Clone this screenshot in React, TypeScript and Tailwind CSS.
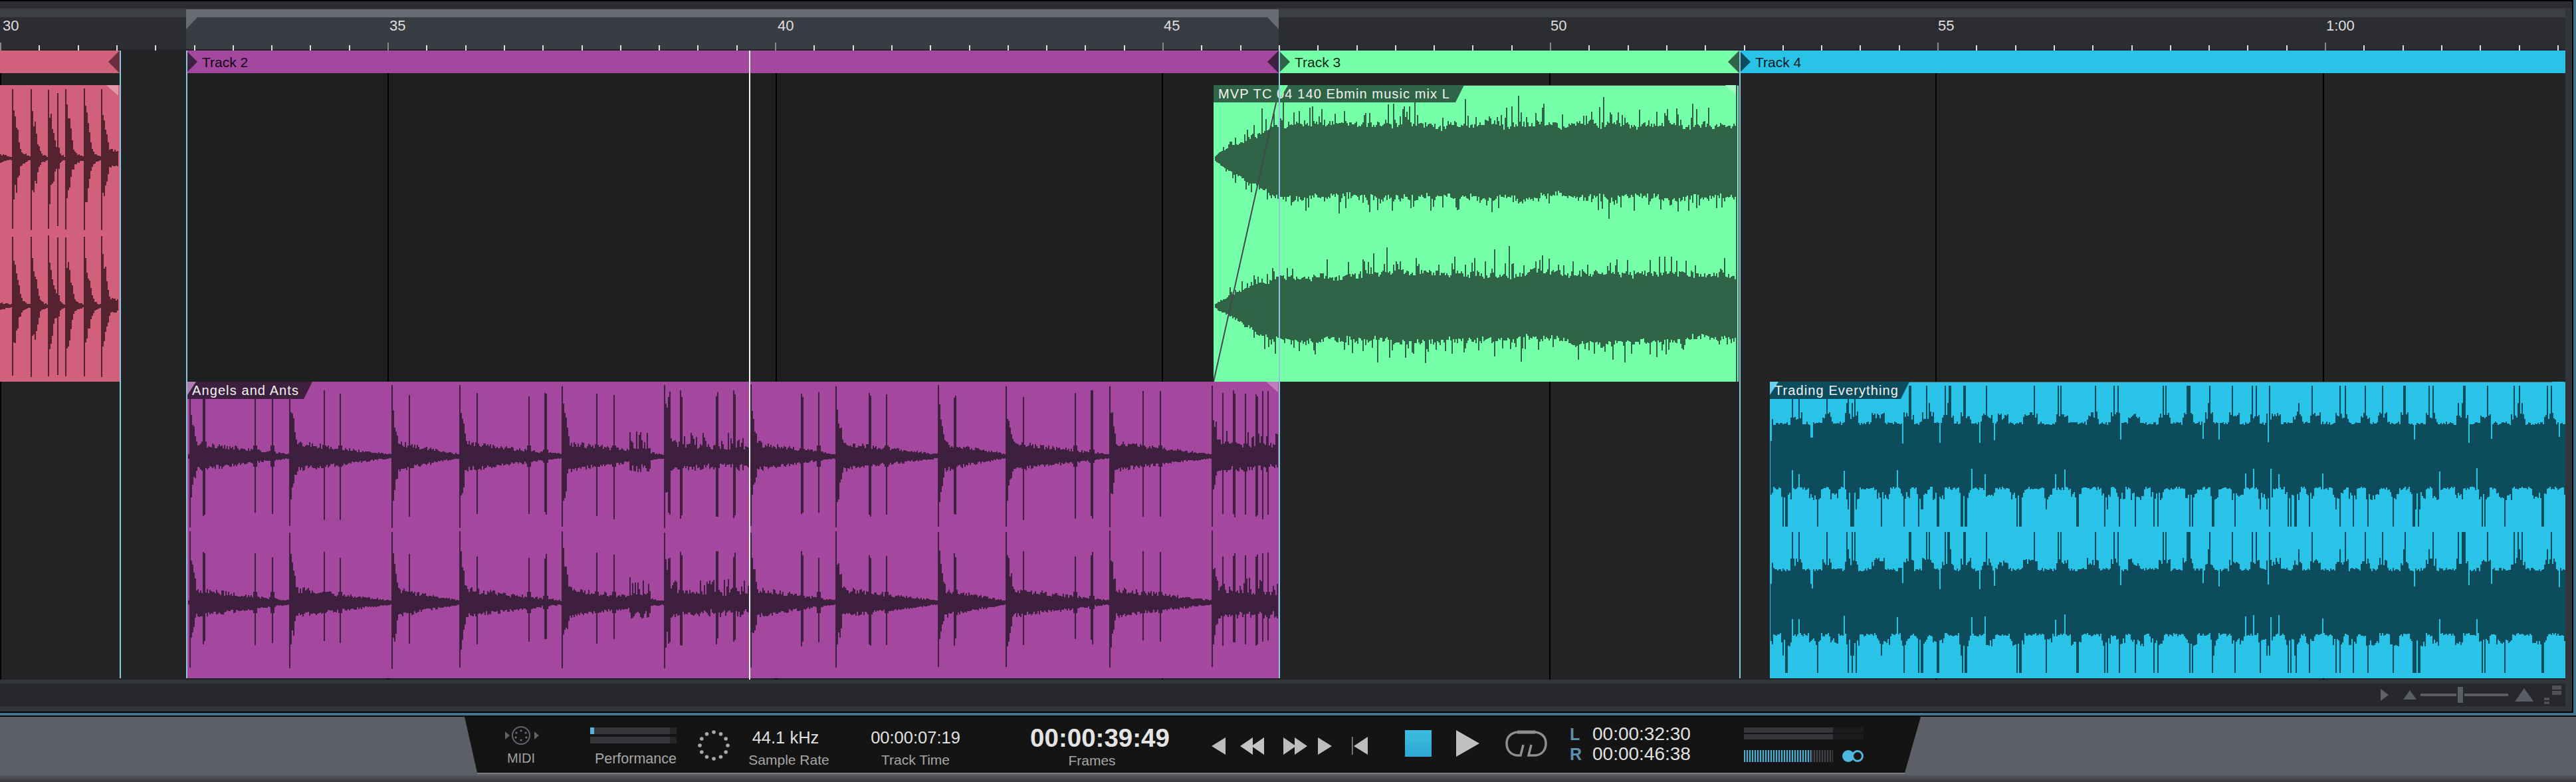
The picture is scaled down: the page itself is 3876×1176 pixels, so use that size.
import React from "react";

type Col = { x: number; top: number; bot: number };

const COL = 2;

function seeded(seed: number) {
  let a = seed;
  return () => {
    a = (a + 0x6d2b79f5) | 0;
    let t = Math.imul(a ^ (a >>> 15), 1 | a);
    t = (t + Math.imul(t ^ (t >>> 7), 61 | t)) ^ t;
    return ((t ^ (t >>> 14)) >>> 0) / 4294967296;
  };
}

// one sub-path per column, x relative to the clip
function toPath(cols: Col[], center: number, left: number) {
  return cols
    .map(
      (c) =>
        `M${c.x - left} ${(center - c.top).toFixed(0)}h${COL}V${(center + c.bot).toFixed(0)}h-${COL}z`
    )
    .join("");
}

function drumChannel(
  from: number,
  to: number,
  mains: number[],
  secs: number[],
  seed: number,
  peak: { mainTop: number; mainBot: number; secTop: number; secBot: number },
  clusters: [number, number, number][],
  bodyScale = 1
) {
  const r = seeded(seed);
  const cols: Col[] = [];
  for (let x = from; x < to; x += COL) {
    let h = from - 40;
    let n = to + 40;
    for (const m of mains) {
      if (m <= x) h = m;
      else {
        n = m;
        break;
      }
    }
    const d = x - h;
    const t = Math.min(1, d / (n - h));
    const plateau = (3 + 17 * Math.pow(1 - t, 1.05)) * bodyScale;
    let top = plateau * (0.75 + r() * 0.55);
    let bot = plateau * (0.85 + r() * 0.45);
    const attack = 78 * Math.exp(-Math.pow(d / 10, 2));
    top = Math.max(top, attack * (0.7 + r() * 0.4));
    bot = Math.max(bot, attack * (0.6 + r() * 0.4));
    if (d < 2) {
      top = Math.max(top, peak.mainTop - r() * 3);
      bot = Math.max(bot, peak.mainBot - r() * 3);
    }
    for (const s of secs) {
      const ds = Math.abs(x - s);
      if (ds <= 1) {
        top = Math.max(top, peak.secTop - r() * 12);
        bot = Math.max(bot, peak.secBot - r() * 12);
      } else {
        const side = 36 * Math.exp(-ds / 2.4);
        top = Math.max(top, side);
        bot = Math.max(bot, side);
      }
    }
    for (const [a, b, v] of clusters) {
      if (x >= a && x < b) {
        const q = r();
        top = Math.max(top, v * (0.5 + q * q * 1.3));
        bot = Math.max(bot, v * (0.5 + r() * 0.6));
      }
    }
    cols.push({ x, top, bot });
  }
  return cols;
}

function greenChannel(from: number, to: number, seed: number, baseTop: number, baseBot: number, peakTop: number, peakBot: number) {
  const r = seeded(seed);
  const cols: Col[] = [];
  let wt = 0;
  let wb = 0;
  for (let x = from; x < to; x += COL) {
    const fade = Math.min(1, Math.pow((x - from + 4) / 100, 0.85));
    wt += (r() - 0.5) * 4 - wt * 0.1;
    wb += (r() - 0.5) * 4 - wb * 0.1;
    let top = baseTop + wt + r() * 9;
    let bot = baseBot + wb + r() * 9;
    if (r() < 0.24) top += r() * (peakTop - baseTop) * 0.55;
    if (r() < 0.2) bot += r() * (peakBot - baseBot) * 0.55;
    if (r() < 0.016) top = peakTop - r() * 12;
    if (r() < 0.016) bot = peakBot - r() * 12;
    cols.push({ x, top: top * fade, bot: bot * fade });
  }
  return cols;
}

// runs of cyan lobes split by groups of full height dark lines
function cyanPattern(from: number, to: number, seed: number) {
  const r = seeded(seed);
  const kinds: number[] = [];
  let x = from;
  while (x < to) {
    const lobe = 14 + Math.floor(r() * 26);
    for (let i = 0; i < lobe && x < to; i += COL, x += COL) {
      const edge = Math.min(i, lobe - i) < 4 ? 1 : 0;
      kinds.push(r() < 0.04 ? 3 : edge);
    }
    const gap = 4 + Math.floor(r() * 12);
    for (let i = 0; i < gap && x < to; i += COL, x += COL) {
      kinds.push(r() < 0.42 ? 2 : 1);
    }
  }
  return kinds;
}

function cyanChannel(from: number, kinds: number[], kindsLow: number[], seed: number) {
  const r = seeded(seed);
  const edgeFor = (k: number, base: number) => {
    if (k === 2) return r() < 0.8 ? 106 : 80;
    if (k === 1) return base + 8 + r() * 12;
    if (k === 3) return base - 18 - r() * 10;
    return base + r() * 5;
  };
  return kinds.map((k, i) => ({
    x: from + i * COL,
    top: edgeFor(k, 47),
    bot: edgeFor(kindsLow[i] ?? 0, 46),
  }));
}

const purpleMains = [284, 435, 588, 690, 845, 999, 1128, 1257, 1411, 1513, 1668, 1822];
const purpleSecs = [306, 383, 409, 487, 511, 615, 717, 795, 820, 897, 923, 1006, 1024, 1078, 1104, 1206, 1231, 1308, 1333, 1436, 1539, 1617, 1642, 1719, 1745, 1839, 1856, 1873, 1890, 1899, 1907];
const purpleClusters: [number, number, number][] = [
  [946, 978, 22],
  [1010, 1128, 20],
  [1826, 1925, 22],
];

const purple1 = drumChannel(283, 1923, purpleMains, purpleSecs, 11, { mainTop: 108, mainBot: 108, secTop: 100, secBot: 96 }, purpleClusters);
const purple2 = drumChannel(283, 1923, purpleMains, purpleSecs, 27, { mainTop: 108, mainBot: 100, secTop: 78, secBot: 66 }, purpleClusters);

const pinkMains = [18, 46, 72, 98, 126, 152];
const pinkSecs = [86];
const pinkPeak = { mainTop: 106, mainBot: 108, secTop: 104, secBot: 106 };
const pink1 = drumChannel(0, 178, pinkMains, pinkSecs, 5, pinkPeak, [], 0.7);
const pink2 = drumChannel(0, 178, pinkMains, pinkSecs, 9, pinkPeak, [], 0.6);

const green1 = greenChannel(1828, 2614, 31, 46, 54, 100, 92);
const green2 = greenChannel(1828, 2614, 47, 42, 47, 90, 88);

const cyanTop = cyanPattern(2664, 3860, 3);
const cyanLow = cyanPattern(2664, 3860, 8);
const cyan1 = cyanChannel(2664, cyanTop, cyanLow, 13);
const cyan2 = cyanChannel(2664, cyanTop, cyanLow, 19);

function Clip({
  left,
  top,
  width,
  height,
  bg,
  wave,
  corner,
  paths,
  borderTop,
  children,
}: {
  left: number;
  top: number;
  width: number;
  height: number;
  bg: string;
  wave: string;
  corner: string;
  paths: string;
  borderTop?: boolean;
  children?: React.ReactNode;
}) {
  return (
    <div className="absolute overflow-hidden" style={{ left, top, width, height, backgroundColor: bg }}>
      <svg className="absolute inset-0" width={width} height={height} viewBox={`0 0 ${width} ${height}`} shapeRendering="crispEdges">
        <path d={paths} fill={wave} />
      </svg>
      {borderTop && <div className="absolute left-0 right-0 top-0 h-[1px] bg-[#5a5c60]" />}
      <div className="absolute right-[2px] top-0 h-[16px] w-[18px] [clip-path:polygon(0_0,100%_0,100%_100%)]" style={{ backgroundColor: corner }} />
      {children}
    </div>
  );
}

function ClipLabel({ width, bg, text, light }: { width: number; bg: string; text: string; light?: string }) {
  return (
    <div
      className="absolute left-0 top-0 flex h-[26px] items-center pl-[7px] text-[20px] leading-none tracking-[1.1px] text-[#f2f2f2] [clip-path:polygon(0_0,100%_0,calc(100%-13px)_100%,0_100%)]"
      style={{ width, backgroundColor: bg }}
    >
      {light && <div className="absolute left-0 top-0 h-[20px] w-[13px] [clip-path:polygon(0_0,100%_0,0_100%)]" style={{ backgroundColor: light }} />}
      <span className="relative whitespace-nowrap">{text}</span>
    </div>
  );
}

function TrackBar({ width, bg, name, startColor, endColor, nameColor }: { width: number; bg: string; name?: string; startColor?: string; endColor?: string; nameColor?: string }) {
  return (
    <div className="relative flex h-full items-center" style={{ width, backgroundColor: bg }}>
      {startColor && <div className="absolute left-0 top-0 h-full w-[17px] [clip-path:polygon(0_0,100%_50%,0_100%)]" style={{ backgroundColor: startColor }} />}
      {endColor && <div className="absolute right-0 top-0 h-full w-[17px] [clip-path:polygon(100%_0,0_50%,100%_100%)]" style={{ backgroundColor: endColor }} />}
      {name && (
        <span className="ml-[24px] text-[21px] leading-none" style={{ color: nameColor }}>
          {name}
        </span>
      )}
    </div>
  );
}

const rulerLabels = [
  { text: "30", left: 4 },
  { text: "35", left: 586 },
  { text: "40", left: 1170 },
  { text: "45", left: 1751 },
  { text: "50", left: 2333 },
  { text: "55", left: 2916 },
  { text: "1:00", left: 3500 },
];

const gridLines = [0, 583, 1167, 1748, 2331, 2912, 3495];
const bluePlaces = [180, 280, 1924, 2617];

function Ruler() {
  const ticks = Array.from({ length: 67 }, (_, i) => i);
  return (
    <div className="relative flex h-[50px] w-full">
      <div className="h-[48px] w-[280px] bg-[#2c2d31]" />
      <div className="h-[48px] w-[1644px] bg-[#383c43]" />
      <div className="h-[48px] flex-1 bg-[#2c2d31]" />
      <div className="absolute bottom-0 left-0 h-[2px] w-full bg-[#232427]" />
      <div className="absolute left-[280px] top-0 h-[18px] w-[17px] bg-[#686c72] [clip-path:polygon(0_0,100%_0,0_100%)]" />
      <div className="absolute left-[1907px] top-0 h-[18px] w-[17px] bg-[#686c72] [clip-path:polygon(0_0,100%_0,100%_100%)]" />
      <svg className="absolute inset-0" width={3860} height={50} shapeRendering="crispEdges">
        {ticks.map((i) => {
          const x = Math.round(i * 58.3);
          const major = i % 10 === 0;
          return <rect key={i} x={x} y={major ? 38 : 42} width={2} height={major ? 12 : 8} fill={major ? "#85888c" : "#dcdcdc"} />;
        })}
      </svg>
      {rulerLabels.map((l) => (
        <span key={l.text} className="absolute top-[1px] text-[22px] leading-[24px] text-[#dfdfdf]" style={{ left: l.left }}>
          {l.text}
        </span>
      ))}
    </div>
  );
}

function MidiIcon() {
  const dots = [
    [14, 8],
    [7, 11],
    [21, 11],
    [6, 18],
    [22, 18],
    [14, 22],
  ];
  return (
    <svg width={56} height={30} viewBox="-14 0 56 30">
      <circle cx={14} cy={15} r={13} fill="none" stroke="#5d6670" strokeWidth={2} />
      {dots.map(([cx, cy]) => (
        <circle key={`${cx}-${cy}`} cx={cx} cy={cy} r={1.6} fill="#6e747c" />
      ))}
      <path d="M-10 9l7 6-7 6zM34 9l7 6-7 6z" fill="#5d6268" />
    </svg>
  );
}

function DotsRing() {
  const dots = Array.from({ length: 12 }, (_, i) => i);
  return (
    <svg width={48} height={46} viewBox="-24 -23 48 46">
      {dots.map((i) => {
        const a = (i * Math.PI) / 6;
        return <circle key={i} cx={Math.sin(a) * 21} cy={-Math.cos(a) * 20} r={2.8} fill="#a9a9a9" />;
      })}
    </svg>
  );
}

function NavButtons() {
  return (
    <svg width={235} height={28} viewBox="0 0 235 28" fill="#bdbdbd">
      <path d="M21 1L0 14l21 13z" />
      <path d="M62 1L43 14l19 13zM79 1L60 14l19 13z" fill="#c4c4c4" />
      <path d="M108 1l19 13-19 13zM125 1l19 13-19 13z" />
      <path d="M160 1l21 13-21 13z" />
      <rect x={211} y={0} width={1.5} height={27} fill="#8f8f8f" />
      <path d="M235 0L214 14l21 13z" />
    </svg>
  );
}

function LoopIcon() {
  return (
    <svg width={63} height={40} viewBox="0 0 63 40" fill="none" stroke="#8f8f8f" strokeWidth={3.5}>
      <path d="M27 22l-4 16h-5C7 37 2 29 2 20 2 9 10 3 20 3h23c10 0 18 6 18 17 0 9-5 17-16 18H35l4-16" />
      <path d="M18 3h27" strokeWidth={5} />
    </svg>
  );
}

function Label({ children }: { children: React.ReactNode }) {
  return <span className="whitespace-nowrap text-[21px] leading-none text-[#a6a6a6]">{children}</span>;
}

function TimeValue({ children }: { children: React.ReactNode }) {
  return <span className="whitespace-nowrap text-[25.5px] leading-none text-[#e0e0e0]">{children}</span>;
}

function Transport() {
  return (
    <div className="ml-[699px] flex h-[84px] w-[2191px] items-start bg-[#141414] [clip-path:polygon(0_0,100%_0,calc(100%-24px)_100%,19px_100%)]">
      <div className="ml-[55px] mt-[13px] flex w-[60px] flex-col items-center gap-[9px]">
        <MidiIcon />
        <span className="text-[20px] leading-none text-[#a0a0a0]">MIDI</span>
      </div>

      <div className="ml-[74px] mt-[16px] flex w-[130px] flex-col">
        <div className="flex h-[10px] bg-[#34363b]">
          <div className="w-[6px] bg-[#5ab0dc]" />
          <div className="ml-auto w-[10px] bg-[#26272a]" />
        </div>
        <div className="mt-[4px] flex h-[10px] justify-end bg-[#34363b]">
          <div className="w-[10px] bg-[#26272a]" />
        </div>
        <div className="mt-[13px] self-end text-[21.5px] leading-none text-[#a6a6a6] whitespace-nowrap">Performance</div>
      </div>

      <div className="ml-[32px] mt-[20px] w-[48px]">
        <DotsRing />
      </div>

      <div className="ml-[28px] mt-[19px] flex w-[122px] flex-col items-center gap-[9px]">
        <div className="mr-[10px] leading-none">
          <TimeValue>44.1 kHz</TimeValue>
        </div>
        <Label>Sample Rate</Label>
      </div>

      <div className="ml-[62px] mt-[19px] flex w-[135px] flex-col items-center gap-[9px]">
        <TimeValue>00:00:07:19</TimeValue>
        <Label>Track Time</Label>
      </div>

      <div className="ml-[105px] mt-[13px] flex w-[210px] flex-col items-center gap-[3px]">
        <span className="whitespace-nowrap text-[38.5px] font-bold leading-none text-[#e4e4e4]">00:00:39:49</span>
        <div className="mr-[24px] leading-none">
          <Label>Frames</Label>
        </div>
      </div>

      <div className="ml-[63px] mt-[30px]">
        <NavButtons />
      </div>

      <div className="ml-[56px] mt-[20px] h-[40px] w-[40px] bg-gradient-to-b from-[#3dbce0] to-[#2ea9d3]" />

      <div className="ml-[37px] mt-[20px] h-[40px] w-[35px] bg-[#c0c0c0] [clip-path:polygon(0_0,100%_50%,0_100%)]" />

      <div className="ml-[39px] mt-[20px]">
        <LoopIcon />
      </div>

      <div className="ml-[34px] mt-[12px] flex w-[182px] flex-col gap-[2px]">
        <div className="flex items-center gap-[20px]">
          <span className="w-[14px] text-[25px] font-bold leading-none text-[#5f8fae]">L</span>
          <span className="whitespace-nowrap text-[28px] leading-none text-[#e0e0e0]">00:00:32:30</span>
        </div>
        <div className="flex items-center gap-[20px]">
          <span className="w-[14px] text-[25px] font-bold leading-none text-[#5f8fae]">R</span>
          <span className="whitespace-nowrap text-[28px] leading-none text-[#e0e0e0]">00:00:46:38</span>
        </div>
      </div>

      <div className="ml-[80px] mt-[16px] flex w-[180px] flex-col">
        <div className="flex h-[8px]">
          <div className="w-[134px] bg-[#34363b]" />
          <div className="flex-1 bg-[#1c1c1f]" />
        </div>
        <div className="mt-[2px] flex h-[8px]">
          <div className="w-[134px] bg-[#34363b]" />
          <div className="flex-1 bg-[#1c1c1f]" />
        </div>
        <div className="mt-[16px] flex h-[18px] items-center">
          <div className="h-full w-[101px] bg-[repeating-linear-gradient(90deg,#5aa9cc_0_2px,#1e2c36_2px_4px)]" />
          <div className="h-full w-[33px] bg-[repeating-linear-gradient(90deg,#3f4145_0_2px,#1c1c1f_2px_4px)]" />
          <div className="relative ml-[14px] h-[18px] w-[32px]">
            <div className="absolute left-0 top-0 h-[18px] w-[18px] rounded-full bg-[#4eb8e0]" />
            <div className="absolute left-[14px] top-0 h-[18px] w-[18px] rounded-full border-[3px] border-[#4eb8e0] bg-[#141414]" />
          </div>
        </div>
      </div>
    </div>
  );
}

export default function App() {
  return (
    <div className="flex h-[1176px] w-[3876px] flex-col overflow-hidden bg-[#5c5f67] [font-family:'Liberation_Sans',Arial,sans-serif]">
      <div className="h-[1078px] border-b-2 border-[#0a0a0a] bg-[#45748f] pb-[4px]">
        <div className="flex h-[1072px] w-[3872px] flex-col border-y-2 border-r-2 border-black bg-[#32353a]">
          <div className="h-[10px] w-full shrink-0 bg-[#2a2c2f]" />
          <div className="flex w-[3860px] flex-1 flex-col">
            {/* loop band */}
            <div className="flex h-[14px] bg-[#3c3f44]">
              <div className="w-[280px] border-t-2 border-[#36383c]" />
              <div className="w-[1644px] border-t-2 border-[#36383c] bg-[#686c72]" />
              <div className="flex-1 border-t-2 border-[#36383c]" />
            </div>

            <Ruler />

            <div className="flex h-[34px] shrink-0">
              <TrackBar width={180} bg="#d1607a" endColor="#6b2e3e" />
              <div className="h-full w-[100px] bg-[#232426]" />
              <TrackBar width={1644} bg="#a3489e" name="Track 2" nameColor="#120612" startColor="#3e2140" endColor="#3e2140" />
              <TrackBar width={693} bg="#76ffa9" name="Track 3" nameColor="#0c2a18" startColor="#2f6546" endColor="#2f6546" />
              <TrackBar width={1243} bg="#2ac3e8" name="Track 4" nameColor="#04161c" startColor="#0c4c5c" />
            </div>

            {/* arrangement, clips sit at their time position */}
            <div className="relative h-[912px] shrink-0 bg-[#232426]">
              <div className="absolute bottom-0 left-[280px] top-0 w-[1644px] bg-[#1e1f21]" />
              {gridLines.map((x) => (
                <div key={x} className="absolute bottom-0 top-0 w-[2px] bg-black" style={{ left: x }} />
              ))}

              <Clip left={0} top={18} width={180} height={446} bg="#d1607a" wave="#54232f" corner="#e196ab" paths={toPath(pink1, 110, 0) + toPath(pink2, 332, 0)} />

              <Clip left={1826} top={18} width={790} height={446} bg="#76ffa9" wave="#2f6546" corner="#a4f8c6" borderTop paths={toPath(green1, 110, 1826) + toPath(green2, 332, 1826)}>
                <svg className="absolute inset-0" width={790} height={446} fill="none">
                  <path d="M0 446L100 0" stroke="#45464f" strokeWidth={2} />
                  <path d="M787 0V446" stroke="#44525a" strokeWidth={2} />
                </svg>
                <ClipLabel width={377} bg="#2f6546" text="MVP TC 04 140 Ebmin music mix L" />
                <div className="absolute left-[98px] top-0 h-[24px] w-[14px] bg-[#76ffa9] [clip-path:polygon(0_0,100%_0,0_100%)]" />
              </Clip>

              <Clip left={282} top={464} width={1643} height={446} bg="#a3489e" wave="#3d1f3e" corner="#c07fbc" paths={toPath(purple1, 112, 282) + toPath(purple2, 332, 282)}>
                <ClipLabel width={188} bg="#3d1f3e" text="Angels and Ants" light="#b47bb3" />
              </Clip>

              <Clip left={2663} top={464} width={1197} height={446} bg="#2ac3e8" wave="#0c4c5c" corner="#2ac3e8" borderTop paths={toPath(cyan1, 112, 2663) + toPath(cyan2, 332, 2663)}>
                <ClipLabel width={210} bg="#0c4c5c" text="Trading Everything" light="#66d0ee" />
              </Clip>

              {bluePlaces.map((x) => (
                <div key={x} className="absolute bottom-[2px] top-[-34px] w-[2px] bg-[#8fc4dc]" style={{ left: x }} />
              ))}
              <div className="absolute bottom-0 left-[1127px] top-[-34px] w-[2px] bg-[#f4f4f4]" />
            </div>

            {/* horizontal scroll and zoom */}
            <div className="mt-[6px] flex h-[34px] shrink-0 items-center justify-end bg-[#27282c]">
              <div className="h-[18px] w-[12px] bg-[#606266] [clip-path:polygon(0_0,100%_50%,0_100%)]" />
              <div className="ml-[22px] h-[14px] w-[20px] bg-[#5a5c66] [clip-path:polygon(50%_0,100%_100%,0_100%)]" />
              <div className="relative ml-[6px] h-[4px] w-[132px] bg-[#5a5c62]">
                <div className="absolute left-[54px] top-[-10px] h-[24px] w-[8px] border-x-2 border-[#27282c] bg-[#5a5c66] [box-sizing:content-box]" />
              </div>
              <div className="ml-[10px] h-[20px] w-[28px] bg-[#5a5c66] [clip-path:polygon(50%_0,100%_100%,0_100%)]" />
              <div className="ml-[16px] mt-[18px] flex w-[8px] flex-col gap-[2px]">
                <div className="h-[4px] bg-[#4f5156]" />
                <div className="h-[4px] bg-[#4f5156]" />
              </div>
              <div className="mb-[14px] ml-[4px] mr-[6px] flex w-[14px] flex-col gap-[2px]">
                <div className="h-[6px] bg-[#4f5156]" />
                <div className="h-[6px] bg-[#4f5156]" />
              </div>
            </div>
          </div>
        </div>
      </div>

      <Transport />
      <div className="ml-[718px] h-[2px] w-[2148px] bg-[#7c7e80]" />
      <div className="h-[2px] bg-[#5c5f67]" />
      <div className="h-[10px] bg-gradient-to-b from-[#55575b] to-[#37383a]" />
    </div>
  );
}
